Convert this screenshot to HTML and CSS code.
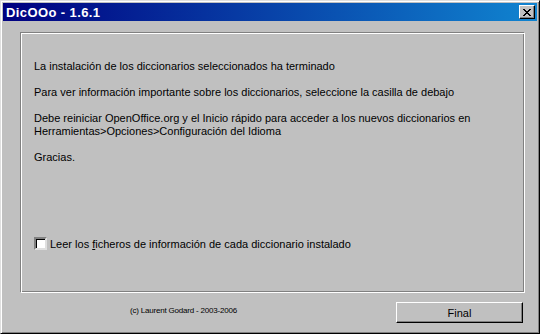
FILE: index.html
```html
<!DOCTYPE html>
<html lang="es">
<head>
    <meta charset="UTF-8">
    <title>DicOOo - 1.6.1</title>
    <link rel="stylesheet" href="styles.css">
</head>
<body>
    <div class="window">
        <div class="titlebar">
            <span class="title">DicOOo - 1.6.1</span>
            <button class="close" type="button" aria-label="Cerrar">
                <svg width="8" height="7" viewBox="0 0 8 7">
                    <path d="M0 0h2v1h1v1h2v-1h1v-1h2v1h-1v1h-1v1h-1v1h1v1h1v1h1v1h-2v-1h-1v-1h-2v1h-1v1h-2v-1h1v-1h1v-1h1v-1h-1v-1h-1v-1h-1z" fill="#000"/>
                </svg>
            </button>
        </div>
        <div class="body">
            <div class="panel">
                <p>La instalación de los diccionarios seleccionados ha terminado</p>
                <p>Para ver información importante sobre los diccionarios, seleccione la casilla de debajo</p>
                <p>Debe reiniciar OpenOffice.org y el Inicio rápido para acceder a los nuevos diccionarios en<br>Herramientas&gt;Opciones&gt;Configuración del Idioma</p>
                <p>Gracias.</p>
                <label class="check">
                    <span class="box"></span>
                    <span>Leer los <u>f</u>icheros de información de cada diccionario instalado</span>
                </label>
            </div>
            <div class="footer">
                <span class="copy">(c) Laurent Godard - 2003-2006</span>
                <button class="btn" type="button">Final</button>
            </div>
        </div>
    </div>
</body>
</html>
```
FILE: styles.css
```css
* {
    box-sizing: border-box;
}

html, body {
    margin: 0;
    padding: 0;
}

body {
    font-family: "Liberation Sans", Arial, sans-serif;
    font-size: 11px;
    color: #000;
    background-color: #c0c0c0;
}

.window {
    width: 540px;
    height: 334px;
    background-color: #c0c0c0;
    border: 1px solid;
    border-color: #dfdfdf #000 #000 #dfdfdf;
    box-shadow: inset 1px 1px 0 #fff, inset -1px -1px 0 #808080;
    padding: 2px;
    display: flex;
    flex-direction: column;
}

.titlebar {
    height: 18px;
    flex: none;
    background: linear-gradient(to right, #000080, #1084d0);
    display: flex;
    align-items: center;
    justify-content: space-between;
    padding: 0 2px 0 3px;
}

.title {
    color: #fff;
    font-weight: bold;
    font-size: 13px;
    letter-spacing: 0.4px;
}

.close {
    width: 16px;
    height: 14px;
    padding: 0;
    margin: 0;
    background-color: #c0c0c0;
    border: 1px solid;
    border-color: #fff #000 #000 #fff;
    box-shadow: inset -1px -1px 0 #808080;
    display: flex;
    align-items: center;
    justify-content: center;
}

.body {
    flex: 1;
    display: flex;
    flex-direction: column;
    padding: 11px 12px 0 17px;
}

.panel {
    height: 261px;
    flex: none;
    border: 1px solid;
    border-color: #808080 #fff #fff #808080;
    box-shadow: inset 1px 1px 0 #fff, inset -1px -1px 0 #808080;
    padding: 27px 14px 0 13px;
    display: flex;
    flex-direction: column;
}

.panel p {
    margin: 0 0 13px;
    line-height: 13px;
}

.check {
    display: flex;
    align-items: center;
    gap: 3px;
    margin-top: 60px;
}

.box {
    width: 13px;
    height: 13px;
    background-color: #fff;
    border: 2px solid;
    border-color: #808080 #dfdfdf #dfdfdf #808080;
    box-shadow: inset 1px 1px 0 #000;
}

.footer {
    flex: 1;
    display: flex;
    align-items: center;
    padding: 0 0 4px;
}

.copy {
    font-size: 8px;
    color: #000;
    margin-left: 110px;
    letter-spacing: -0.2px;
}

.btn {
    align-self: flex-start;
    margin: 9px 2px 0 auto;
    width: 127px;
    height: 21px;
    font-family: "Liberation Sans", Arial, sans-serif;
    font-size: 11px;
    background-color: #c0c0c0;
    border: 1px solid;
    border-color: #fff #000 #000 #fff;
    box-shadow: inset -1px -1px 0 #808080;
    padding: 0;
}
```
